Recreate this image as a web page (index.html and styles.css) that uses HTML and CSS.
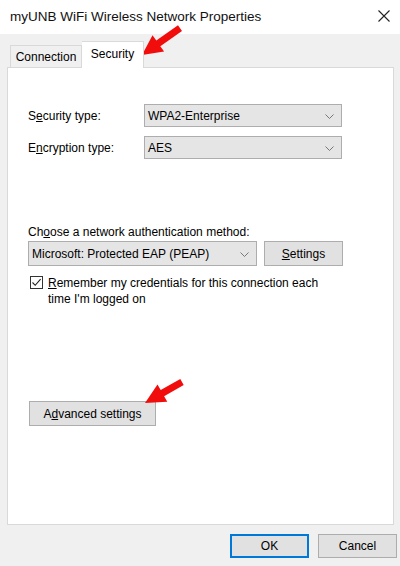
FILE: index.html
```html
<!DOCTYPE html>
<html lang="en">
<head>
    <meta charset="UTF-8">
    <title>myUNB WiFi Wireless Network Properties</title>
    <link rel="stylesheet" href="styles.css">
</head>
<body>
<div class="dialog">
    <!-- Title bar -->
    <div class="titlebar">
        <span class="title">myUNB WiFi Wireless Network Properties</span>
        <svg class="close" width="12" height="12" viewBox="0 0 12 12">
            <path d="M0.5 0.5 L11.5 11.5 M11.5 0.5 L0.5 11.5" stroke="#222" stroke-width="1.1" fill="none"/>
        </svg>
    </div>

    <!-- Tabs -->
    <div class="tabs">
        <div class="tab">Connection</div>
        <div class="tab active">Security</div>
    </div>

    <div class="panel">
        <div class="row first">
            <span class="label">S<u>e</u>curity type:</span>
            <div class="select wide"><span>WPA2-Enterprise</span><svg class="chev" width="9" height="5" viewBox="0 0 9 5"><path d="M0.5 0.5 L4.5 4.5 L8.5 0.5" stroke="#777" fill="none"/></svg></div>
        </div>
        <div class="row">
            <span class="label">E<u>n</u>cryption type:</span>
            <div class="select wide"><span>AES</span><svg class="chev" width="9" height="5" viewBox="0 0 9 5"><path d="M0.5 0.5 L4.5 4.5 L8.5 0.5" stroke="#777" fill="none"/></svg></div>
        </div>

        <p class="method">Ch<u>o</u>ose a network authentication method:</p>
        <div class="auth">
            <div class="select auth-select"><span>Microsoft: Protected EAP (PEAP)</span><svg class="chev" width="9" height="5" viewBox="0 0 9 5"><path d="M0.5 0.5 L4.5 4.5 L8.5 0.5" stroke="#777" fill="none"/></svg></div>
            <button class="btn settings"><u>S</u>ettings</button>
        </div>
        <div class="check">
            <span class="box">
                <svg width="11" height="11" viewBox="0 0 11 11"><path d="M1.5 5.5 L4.2 8.3 L9.6 2.2" stroke="#222" stroke-width="1.1" fill="none"/></svg>
            </span>
            <span class="check-text"><u>R</u>emember my credentials for this connection each<br>time I'm logged on</span>
        </div>

        <button class="btn advanced">A<u>d</u>vanced settings</button>
    </div>

    <div class="footer">
        <button class="btn ok">OK</button>
        <button class="btn cancel">Cancel</button>
    </div>

    <!-- red annotation arrows -->
    <svg class="arrows" width="400" height="566" viewBox="0 0 400 566">
        <polygon fill="#f20d0d" points="142,55 164.1,51.6 160.3,46.3 182,30.9 178,25.2 156.3,40.6 152.5,35.3"/>
        <polygon fill="#f20d0d" points="145,403 167.3,401.8 164.1,396.2 183.7,385 180.3,379 160.7,390.1 157.5,384.4"/>
    </svg>
</div>
</body>
</html>
```

FILE: styles.css
```css
body {
    margin: 0;
    font-family: "Liberation Sans", Arial, sans-serif;
    font-size: 12px;
    color: #000;
}
.dialog {
    position: relative;
    width: 400px;
    height: 566px;
    background: #f0f0f0;
    overflow: hidden;
}
.titlebar {
    height: 34px;
    background: #fff;
    display: flex;
    align-items: center;
    justify-content: space-between;
    padding: 0 9px 2px 10px;
    box-sizing: border-box;
}
.title {
    font-size: 13.5px;
    color: #111;
}
.close {
    margin-right: 1px;
}
.tabs {
    display: flex;
    align-items: flex-end;
    height: 33px;
    padding-left: 10px;
}
.tab {
    height: 21px;
    width: 70px;
    border: 1px solid #d9d9d9;
    border-bottom: none;
    background: #f0f0f0;
    display: flex;
    align-items: center;
    justify-content: center;
}
.tab.active {
    width: 62px;
    height: 27px;
    margin-bottom: -1px;
    border-left: none;
    background: #fff;
    padding-bottom: 3px;
    box-sizing: border-box;
    position: relative;
    z-index: 1;
}
.panel {
    margin: 0 6px 0 7px;
    height: 458px;
    background: #fff;
    border: 1px solid #d9d9d9;
    box-sizing: border-box;
    padding: 36px 0 0 20px;
}
.row {
    display: flex;
    align-items: center;
    margin-bottom: 9px;
}
.label {
    width: 116px;
}
.select {
    height: 23px;
    background: #e5e5e5;
    border: 1px solid #adadad;
    box-sizing: border-box;
    display: flex;
    align-items: center;
    justify-content: space-between;
    padding: 0 7px 0 3px;
}
.select.wide {
    width: 198px;
}
.chev {
    margin-top: 1px;
}
.method {
    margin: 66px 0 2px 0;
}
.auth {
    display: flex;
    align-items: center;
    gap: 7px;
}
.auth-select {
    width: 229px;
    height: 25px;
}
.btn {
    font-family: inherit;
    font-size: 12px;
    color: #000;
    background: #e1e1e1;
    border: 1px solid #adadad;
    padding: 0;
    box-sizing: border-box;
}
.settings {
    width: 79px;
    height: 25px;
}
.check {
    display: flex;
    align-items: flex-start;
    margin: 9px 0 0 2px;
    line-height: 16px;
}
.box {
    width: 13px;
    height: 13px;
    border: 1px solid #333;
    box-sizing: border-box;
    display: flex;
    align-items: center;
    justify-content: center;
    margin: 1px 5px 0 0;
    background: #fff;
}
.advanced {
    display: block;
    margin-top: 94px;
    margin-left: 1px;
    width: 127px;
    height: 25px;
}
.footer {
    display: flex;
    justify-content: flex-end;
    gap: 9px;
    padding: 9px 3px 0 0;
}
.ok, .cancel {
    width: 79px;
    height: 24px;
}
.ok {
    border: 2px solid #0078d7;
}
.arrows {
    position: absolute;
    left: 0;
    top: 0;
    pointer-events: none;
}
```
